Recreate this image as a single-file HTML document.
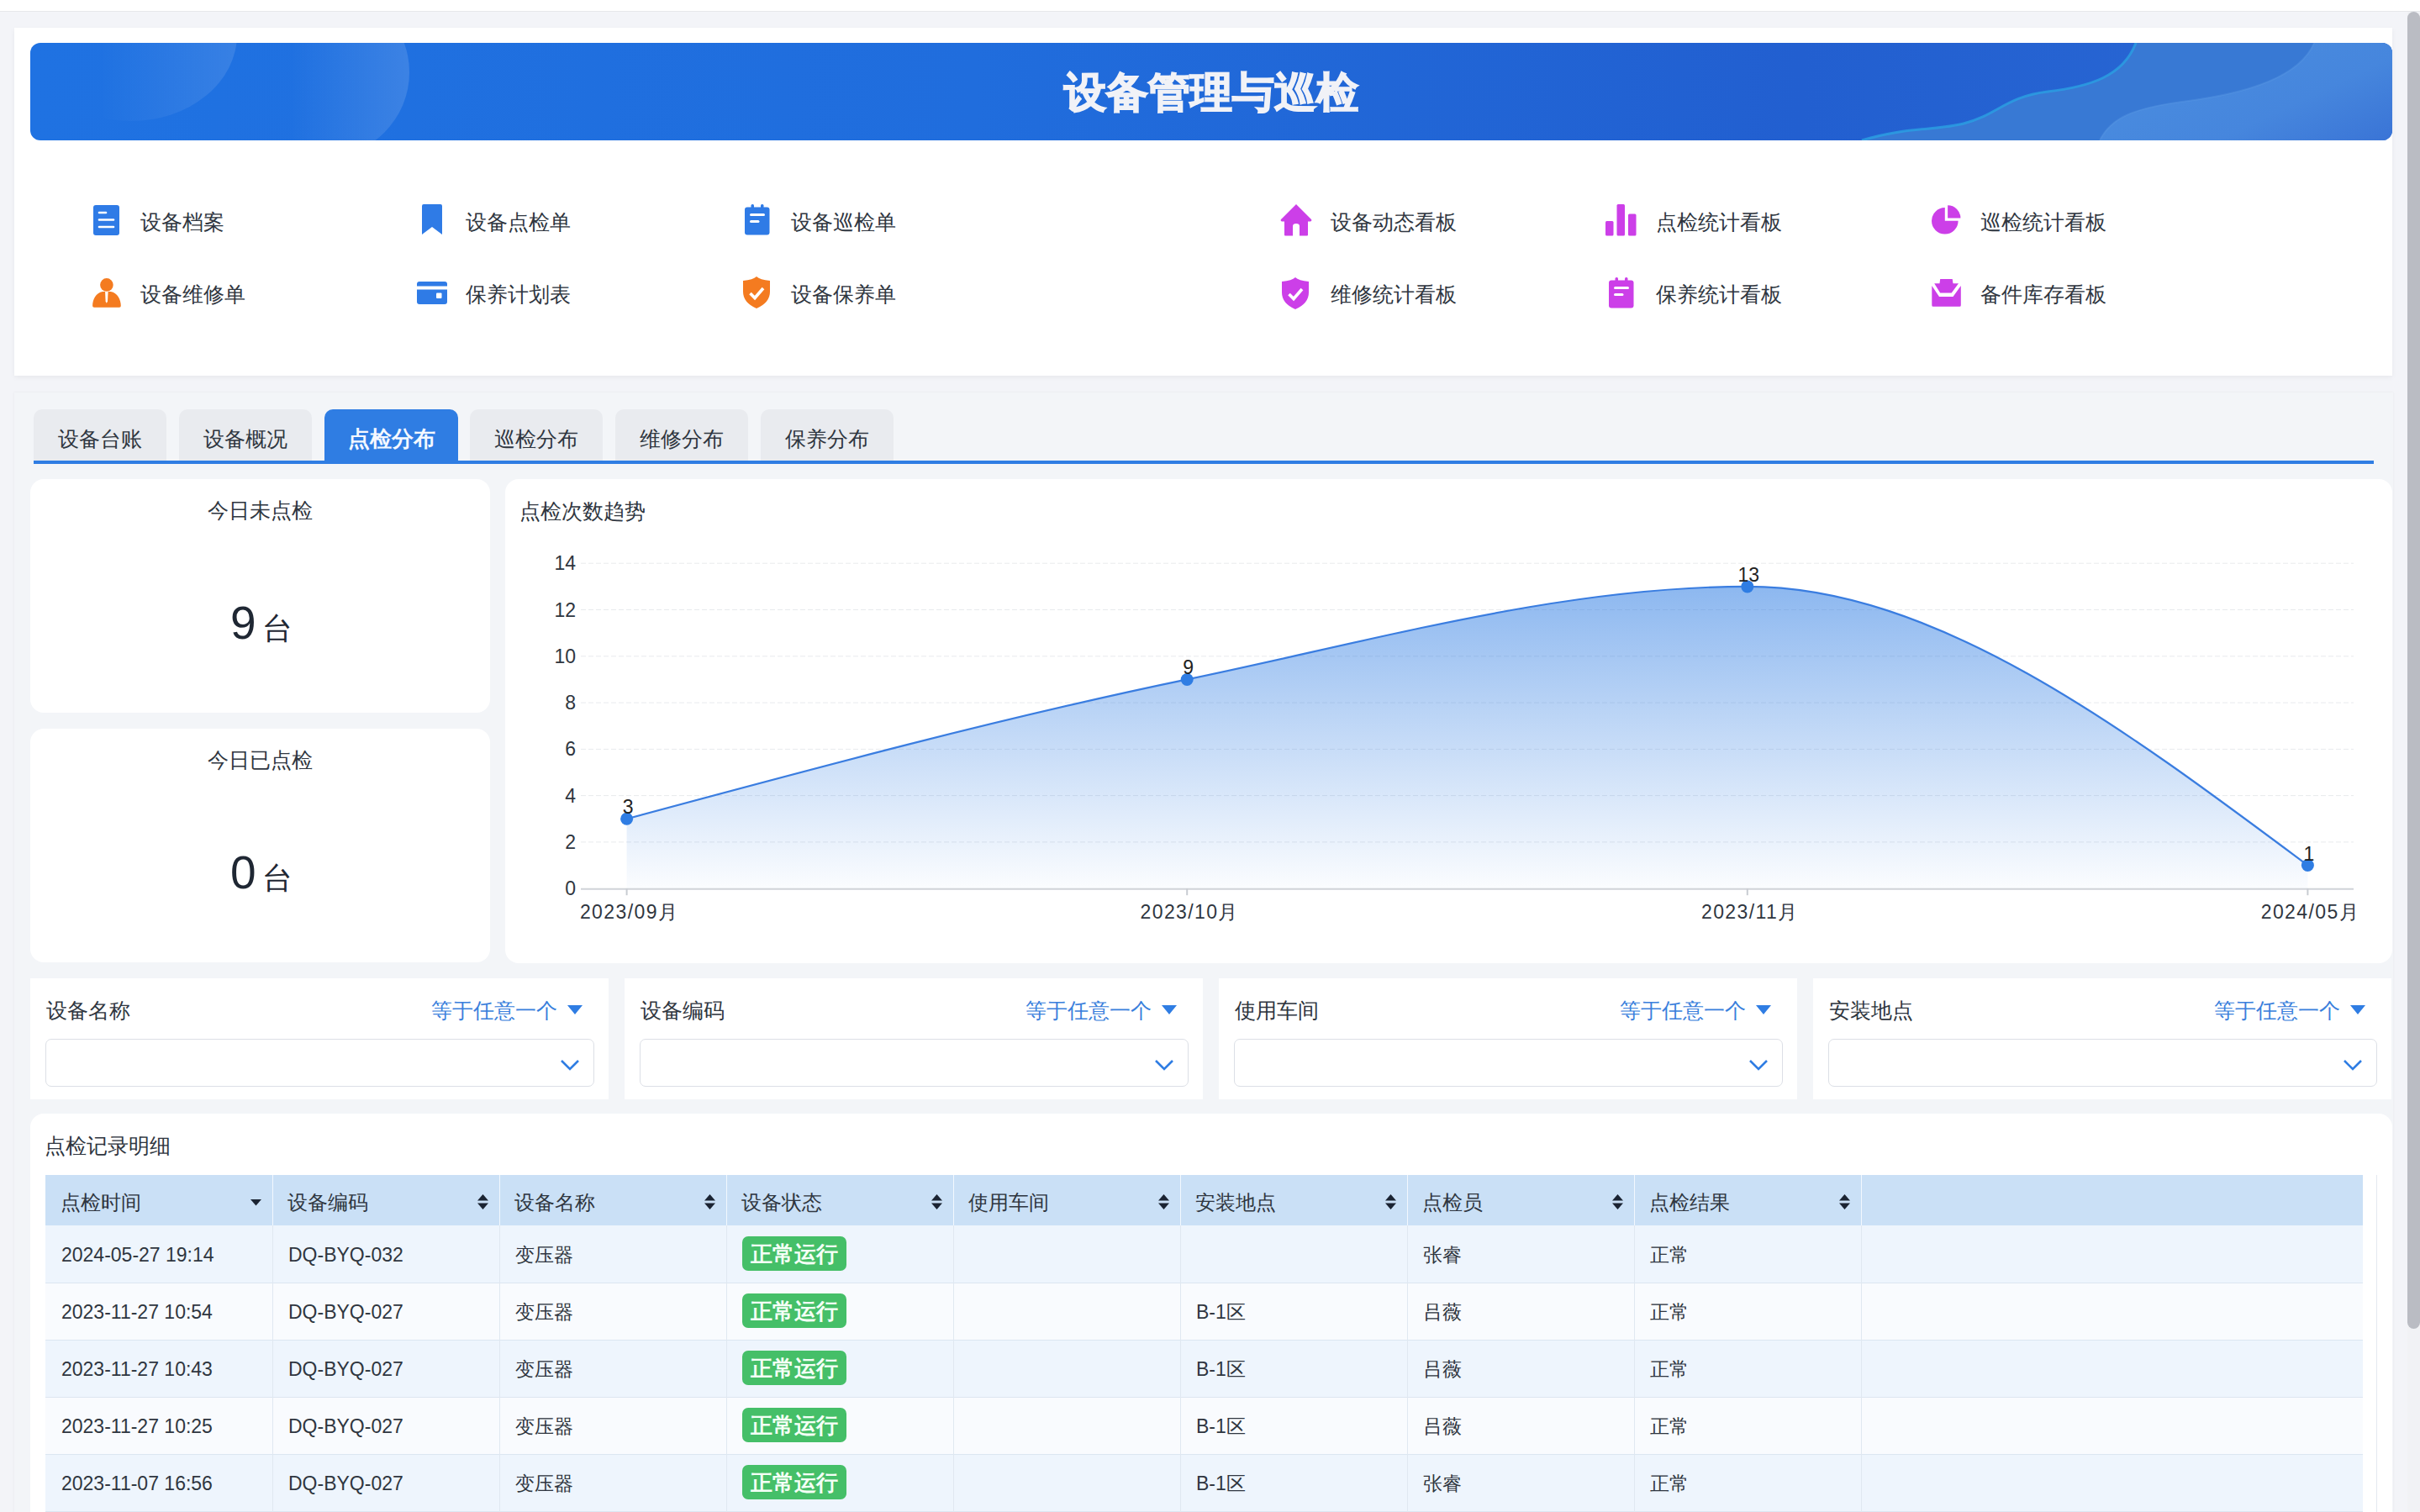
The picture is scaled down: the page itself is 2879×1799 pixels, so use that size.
<!DOCTYPE html>
<html><head><meta charset="utf-8"><title>设备管理与巡检</title>
<style>
*{box-sizing:border-box;margin:0;padding:0}
html,body{width:2879px;height:1799px;overflow:hidden}
body{background:#f3f4f8;font-family:"Liberation Sans", sans-serif;color:#2f3640;position:relative}
.a{position:absolute}
.t{position:absolute;white-space:nowrap;line-height:1}
</style></head><body>

<div class="a" style="left:0;top:0;width:2879px;height:14px;background:#fff;border-bottom:1px solid #e6e7ea"></div>
<div class="a" style="left:2864px;top:14px;width:15px;height:1785px;background:#f1f2f5"></div>
<div class="a" style="left:2864px;top:14px;width:15px;height:1567px;background:#babcc3;border-radius:8px"></div>
<div class="a" style="left:17px;top:33px;width:2829px;height:414px;background:#fff;box-shadow:0 2px 6px rgba(0,0,0,0.05)"></div>
<div class="a" style="left:36px;top:51px;width:2810px;height:116px;border-radius:12px;overflow:hidden;background:linear-gradient(90deg,#1f72e2 0%,#206ddd 40%,#225fd0 75%,#2a68d4 100%)">
<svg width="2810" height="116" style="position:absolute;left:0;top:0">
<defs>
<linearGradient id="c1" x1="0" y1="0" x2="1" y2="0"><stop offset="0.35" stop-color="#fff" stop-opacity="0"/><stop offset="1" stop-color="#fff" stop-opacity="0.11"/></linearGradient>
<linearGradient id="c2" x1="0" y1="0" x2="1" y2="0"><stop offset="0.3" stop-color="#fff" stop-opacity="0"/><stop offset="1" stop-color="#fff" stop-opacity="0.13"/></linearGradient>
<linearGradient id="w2" x1="0" y1="0.3" x2="1" y2="1"><stop offset="0" stop-color="#4a8ddf"/><stop offset="0.6" stop-color="#4686dd"/><stop offset="1" stop-color="#3a74d6"/></linearGradient>
</defs>
<ellipse cx="120" cy="-10" rx="126" ry="103" fill="url(#c1)"/>
<circle cx="350" cy="35" r="101" fill="url(#c2)"/>
<path d="M2179,116 C2230,100 2270,104 2300,96 C2340,86 2350,64 2400,58 C2450,52 2490,40 2505,0 L2810,0 L2810,116 Z" fill="#3879d4"/>
<path d="M2179,116 C2230,100 2270,104 2300,96 C2340,86 2350,64 2400,58 C2450,52 2490,40 2505,0" fill="none" stroke="#2aa0e2" stroke-width="3" opacity="0.8"/>
<path d="M2462,116 C2475,90 2500,78 2560,70 C2640,60 2700,40 2717,0 L2810,0 L2810,116 Z" fill="url(#w2)"/><path d="M2462,116 C2475,90 2500,78 2560,70 C2640,60 2700,40 2717,0" fill="none" stroke="#5b9ae6" stroke-width="2" opacity="0.35"/>
</svg>
<div class="t" style="left:0;width:2810px;text-align:center;top:34px;font-size:50px;font-weight:bold;color:#f1f2f7;-webkit-text-stroke:1.5px #f1f2f7">设备管理与巡检</div>
</div>
<svg class="a" style="left:111px;top:244px" width="31" height="36"><rect x="0" y="0" width="31" height="36" rx="3" fill="#2f7be6"/><g stroke="#fff" stroke-width="2.6" stroke-linecap="round"><line x1="7" y1="9" x2="15" y2="9"/><line x1="7" y1="17.5" x2="24" y2="17.5"/><line x1="7" y1="26" x2="24" y2="26"/></g></svg>
<div class="t" style="left:167px;top:252px;font-size:25.25px">设备档案</div>
<svg class="a" style="left:502px;top:243px" width="24" height="37"><path d="M2,0 L22,0 Q24,0 24,2 L24,36 L12,27 L0,36 L0,2 Q0,0 2,0 Z" fill="#2f7be6"/></svg>
<div class="t" style="left:554px;top:252px;font-size:25.25px">设备点检单</div>
<svg class="a" style="left:886px;top:243px" width="30" height="37"><rect x="0" y="3.5" width="29.5" height="33" rx="3" fill="#2f7be6"/><rect x="7.5" y="0" width="3.5" height="6" rx="1.5" fill="#2f7be6"/><rect x="19" y="0" width="3.5" height="6" rx="1.5" fill="#2f7be6"/><g stroke="#fff" stroke-width="3" stroke-linecap="round"><line x1="7.5" y1="12.5" x2="22.5" y2="12.5"/><line x1="7.5" y1="20.5" x2="16" y2="20.5"/></g></svg>
<div class="t" style="left:941px;top:252px;font-size:25.25px">设备巡检单</div>
<svg class="a" style="left:1523px;top:243px" width="38" height="38"><path d="M19,0 L37,18 Q38,20 36,20.5 L33,20.5 L33,36.5 Q33,37.5 32,37.5 L23,37.5 L23,26 Q23,23 19,23 Q15,23 15,26 L15,37.5 L6,37.5 Q5,37.5 5,36.5 L5,20.5 L2,20.5 Q0,20 1,18 Z" fill="#cc3fe8"/></svg>
<div class="t" style="left:1583px;top:252px;font-size:25.25px">设备动态看板</div>
<svg class="a" style="left:1910px;top:243px" width="37" height="38"><rect x="0" y="20" width="9.5" height="17.5" rx="1.5" fill="#cc3fe8"/><rect x="13.5" y="0" width="9.5" height="37.5" rx="1.5" fill="#cc3fe8"/><rect x="27" y="11.5" width="9.5" height="26" rx="1.5" fill="#cc3fe8"/></svg>
<div class="t" style="left:1970px;top:252px;font-size:25.25px">点检统计看板</div>
<svg class="a" style="left:2298px;top:244px" width="36" height="36"><path d="M15.8,3 L15.8,18.8 L31.6,18.8 A15.8,15.8 0 1 1 15.8,3 Z" fill="#cc3fe8"/><path d="M19.1,0.2 A15.3,15.3 0 0 1 34.4,15.5 L19.1,15.5 Z" fill="#cc3fe8"/></svg>
<div class="t" style="left:2356px;top:252px;font-size:25.25px">巡检统计看板</div>
<svg class="a" style="left:110px;top:331px" width="35" height="36"><circle cx="16.9" cy="7.9" r="7.8" fill="#f47b20"/><path d="M12,16.1 C4,17.5 0,26 0.1,33 Q0.1,34.7 2,34.7 L32,34.7 Q33.8,34.7 33.8,33 C33.8,26 29.8,17.5 21.8,16.1 Z" fill="#f47b20"/><path d="M15.1,16.1 L18.6,16.1 L18,27.5 L16.8,29.7 L15.6,27.5 Z" fill="#fff"/></svg>
<div class="t" style="left:167px;top:338px;font-size:25.25px">设备维修单</div>
<svg class="a" style="left:496px;top:335px" width="36" height="27"><rect x="0" y="0" width="36" height="27" rx="3" fill="#2f7be6"/><rect x="0" y="5.5" width="36" height="4" fill="#fff"/><rect x="23" y="13.5" width="6.5" height="6.5" rx="1" fill="#fff"/></svg>
<div class="t" style="left:554px;top:338px;font-size:25.25px">保养计划表</div>
<svg class="a" style="left:884px;top:329px" width="32" height="38"><path d="M16,0 Q20,4 32,5 L32,18 Q32,31 16,38 Q0,31 0,18 L0,5 Q12,4 16,0 Z" fill="#f47b20"/><path d="M8.5,20 L14,25.5 L24,14" fill="none" stroke="#fff" stroke-width="3.6"/></svg>
<div class="t" style="left:941px;top:338px;font-size:25.25px">设备保养单</div>
<svg class="a" style="left:1525px;top:330px" width="32" height="38"><path d="M16,0 Q20,4 32,5 L32,18 Q32,31 16,38 Q0,31 0,18 L0,5 Q12,4 16,0 Z" fill="#cc3fe8"/><path d="M8.5,20 L14,25.5 L24,14" fill="none" stroke="#fff" stroke-width="3.6"/></svg>
<div class="t" style="left:1583px;top:338px;font-size:25.25px">维修统计看板</div>
<svg class="a" style="left:1914px;top:330px" width="30" height="37"><rect x="0" y="3.5" width="29.5" height="33" rx="3" fill="#cc3fe8"/><rect x="7.5" y="0" width="3.5" height="6" rx="1.5" fill="#cc3fe8"/><rect x="19" y="0" width="3.5" height="6" rx="1.5" fill="#cc3fe8"/><g stroke="#fff" stroke-width="3" stroke-linecap="round"><line x1="7.5" y1="12.5" x2="22.5" y2="12.5"/><line x1="7.5" y1="20.5" x2="16" y2="20.5"/></g></svg>
<div class="t" style="left:1970px;top:338px;font-size:25.25px">保养统计看板</div>
<svg class="a" style="left:2298px;top:332px" width="36" height="34"><path d="M10.2,0 L24.7,0 L25.5,5.3 L32,5.3 L23.7,16.6 L10.2,16.6 L3.2,5.3 L9.5,5.3 Z" fill="#cc3fe8"/><path d="M0.3,8 L9,20.9 L25.5,20.9 L34.8,8 L34.8,31.3 Q34.8,32.8 33.3,32.8 L1.8,32.8 Q0.3,32.8 0.3,31.3 Z" fill="#cc3fe8"/></svg>
<div class="t" style="left:2356px;top:338px;font-size:25.25px">备件库存看板</div>
<div class="a" style="left:17px;top:467px;width:2830px;height:1340px;background:#f3f5f8;box-shadow:0 0 3px rgba(0,0,0,0.06)"></div>
<div class="a" style="left:40px;top:487px;width:158px;height:61px;background:#e9ebef;border-radius:10px 10px 0 0"></div>
<div class="t" style="left:40px;width:158px;text-align:center;top:509.5px;font-size:25.25px">设备台账</div>
<div class="a" style="left:213px;top:487px;width:158px;height:61px;background:#e9ebef;border-radius:10px 10px 0 0"></div>
<div class="t" style="left:213px;width:158px;text-align:center;top:509.5px;font-size:25.25px">设备概况</div>
<div class="a" style="left:386px;top:487px;width:159px;height:64px;background:#2f7de3;border-radius:10px 10px 0 0"></div>
<div class="t" style="left:386px;width:159px;text-align:center;top:509.5px;font-size:25.5px;font-weight:bold;color:#f4f8ff">点检分布</div>
<div class="a" style="left:559px;top:487px;width:158px;height:61px;background:#e9ebef;border-radius:10px 10px 0 0"></div>
<div class="t" style="left:559px;width:158px;text-align:center;top:509.5px;font-size:25.25px">巡检分布</div>
<div class="a" style="left:732px;top:487px;width:158px;height:61px;background:#e9ebef;border-radius:10px 10px 0 0"></div>
<div class="t" style="left:732px;width:158px;text-align:center;top:509.5px;font-size:25.25px">维修分布</div>
<div class="a" style="left:905px;top:487px;width:158px;height:61px;background:#e9ebef;border-radius:10px 10px 0 0"></div>
<div class="t" style="left:905px;width:158px;text-align:center;top:509.5px;font-size:25.25px">保养分布</div>
<div class="a" style="left:40px;top:548px;width:2784px;height:4px;background:#2f7de3"></div>
<div class="a" style="left:36px;top:570px;width:547px;height:278px;background:#fff;border-radius:16px"></div>
<div class="t" style="left:36px;width:547px;text-align:center;top:594.5px;font-size:25.25px">今日未点检</div>
<div class="t" style="left:274px;top:713.5px;font-size:55px;color:#1f2733">9</div>
<div class="t" style="left:312px;top:730px;font-size:36px;color:#1f2733">台</div>
<div class="a" style="left:36px;top:867px;width:547px;height:278px;background:#fff;border-radius:16px"></div>
<div class="t" style="left:36px;width:547px;text-align:center;top:891.5px;font-size:25.25px">今日已点检</div>
<div class="t" style="left:274px;top:1010.5px;font-size:55px;color:#1f2733">0</div>
<div class="t" style="left:312px;top:1027px;font-size:36px;color:#1f2733">台</div>
<div class="a" style="left:601px;top:570px;width:2245px;height:576px;background:#fff;border-radius:16px"></div>
<div class="t" style="left:618px;top:595.5px;font-size:25.25px">点检次数趋势</div>
<svg class="a" style="left:0;top:0" width="2879" height="1799"><defs><linearGradient id="ag" x1="0" y1="697.88" x2="0" y2="1057.2" gradientUnits="userSpaceOnUse"><stop offset="0" stop-color="#2f7de3" stop-opacity="0.55"/><stop offset="1" stop-color="#2f7de3" stop-opacity="0.02"/></linearGradient></defs><line x1="691" y1="1001.9" x2="2800" y2="1001.9" stroke="#e8eaed" stroke-width="1" stroke-dasharray="6,3"/><line x1="691" y1="946.6" x2="2800" y2="946.6" stroke="#e8eaed" stroke-width="1" stroke-dasharray="6,3"/><line x1="691" y1="891.4" x2="2800" y2="891.4" stroke="#e8eaed" stroke-width="1" stroke-dasharray="6,3"/><line x1="691" y1="836.1" x2="2800" y2="836.1" stroke="#e8eaed" stroke-width="1" stroke-dasharray="6,3"/><line x1="691" y1="780.8" x2="2800" y2="780.8" stroke="#e8eaed" stroke-width="1" stroke-dasharray="6,3"/><line x1="691" y1="725.5" x2="2800" y2="725.5" stroke="#e8eaed" stroke-width="1" stroke-dasharray="6,3"/><line x1="691" y1="670.2" x2="2800" y2="670.2" stroke="#e8eaed" stroke-width="1" stroke-dasharray="6,3"/><path d="M745.60,974.28 C967.80,914.39 1190.00,854.51 1412.20,808.44 C1634.40,762.37 1856.60,697.88 2078.80,697.88 C2301.00,697.88 2523.20,863.72 2745.40,1029.56 L2745.4,1057.2 L745.6,1057.2 Z" fill="url(#ag)"/><line x1="691" y1="1057.7" x2="2800" y2="1057.7" stroke="#d0d3d8" stroke-width="2"/><line x1="745.6" y1="1057.2" x2="745.6" y2="1065.2" stroke="#c8ccd2" stroke-width="2"/><line x1="1412.2" y1="1057.2" x2="1412.2" y2="1065.2" stroke="#c8ccd2" stroke-width="2"/><line x1="2078.8" y1="1057.2" x2="2078.8" y2="1065.2" stroke="#c8ccd2" stroke-width="2"/><line x1="2745.4" y1="1057.2" x2="2745.4" y2="1065.2" stroke="#c8ccd2" stroke-width="2"/><path d="M745.60,974.28 C967.80,914.39 1190.00,854.51 1412.20,808.44 C1634.40,762.37 1856.60,697.88 2078.80,697.88 C2301.00,697.88 2523.20,863.72 2745.40,1029.56" fill="none" stroke="#3a7de0" stroke-width="2.2"/><circle cx="745.6" cy="974.28" r="7.5" fill="#2f7de3"/><circle cx="1412.2" cy="808.44" r="7.5" fill="#2f7de3"/><circle cx="2078.8" cy="697.88" r="7.5" fill="#2f7de3"/><circle cx="2745.4" cy="1029.56" r="7.5" fill="#2f7de3"/></svg>
<div class="t" style="left:600px;width:85px;text-align:right;top:1046.2px;font-size:23px">0</div>
<div class="t" style="left:600px;width:85px;text-align:right;top:990.9px;font-size:23px">2</div>
<div class="t" style="left:600px;width:85px;text-align:right;top:935.6px;font-size:23px">4</div>
<div class="t" style="left:600px;width:85px;text-align:right;top:880.4px;font-size:23px">6</div>
<div class="t" style="left:600px;width:85px;text-align:right;top:825.1px;font-size:23px">8</div>
<div class="t" style="left:600px;width:85px;text-align:right;top:769.8px;font-size:23px">10</div>
<div class="t" style="left:600px;width:85px;text-align:right;top:714.5px;font-size:23px">12</div>
<div class="t" style="left:600px;width:85px;text-align:right;top:659.2px;font-size:23px">14</div>
<div class="t" style="left:648.6px;width:200px;text-align:center;top:1074px;font-size:23px;letter-spacing:1.4px">2023/09月</div>
<div class="t" style="left:1315.2px;width:200px;text-align:center;top:1074px;font-size:23px;letter-spacing:1.4px">2023/10月</div>
<div class="t" style="left:1981.8000000000002px;width:200px;text-align:center;top:1074px;font-size:23px;letter-spacing:1.4px">2023/11月</div>
<div class="t" style="left:2648.4px;width:200px;text-align:center;top:1074px;font-size:23px;letter-spacing:1.4px">2024/05月</div>
<div class="t" style="left:697.1px;width:100px;text-align:center;top:949.3px;font-size:23px;color:#222">3</div>
<div class="t" style="left:1363.7px;width:100px;text-align:center;top:783.4px;font-size:23px;color:#222">9</div>
<div class="t" style="left:2030.3000000000002px;width:100px;text-align:center;top:672.9px;font-size:23px;color:#222">13</div>
<div class="t" style="left:2696.9px;width:100px;text-align:center;top:1004.6px;font-size:23px;color:#222">1</div>
<div class="a" style="left:36px;top:1164px;width:688px;height:144px;background:#fff"></div>
<div class="t" style="left:55px;top:1190px;font-size:25.25px">设备名称</div>
<div class="t" style="left:513px;top:1190px;font-size:25.25px;color:#3a7fdc">等于任意一个</div>
<svg class="a" style="left:675px;top:1196px" width="18" height="12"><path d="M0,0 L18,0 L9,11 Z" fill="#2f7de3"/></svg>
<div class="a" style="left:54px;top:1236px;width:653px;height:57px;border:1.5px solid #dcdfe6;border-radius:7px;background:#fff"></div>
<svg class="a" style="left:666px;top:1260px" width="24" height="14"><path d="M2,2 L12,12 L22,2" fill="none" stroke="#2f7de3" stroke-width="2.6"/></svg>
<div class="a" style="left:743px;top:1164px;width:688px;height:144px;background:#fff"></div>
<div class="t" style="left:762px;top:1190px;font-size:25.25px">设备编码</div>
<div class="t" style="left:1220px;top:1190px;font-size:25.25px;color:#3a7fdc">等于任意一个</div>
<svg class="a" style="left:1382px;top:1196px" width="18" height="12"><path d="M0,0 L18,0 L9,11 Z" fill="#2f7de3"/></svg>
<div class="a" style="left:761px;top:1236px;width:653px;height:57px;border:1.5px solid #dcdfe6;border-radius:7px;background:#fff"></div>
<svg class="a" style="left:1373px;top:1260px" width="24" height="14"><path d="M2,2 L12,12 L22,2" fill="none" stroke="#2f7de3" stroke-width="2.6"/></svg>
<div class="a" style="left:1450px;top:1164px;width:688px;height:144px;background:#fff"></div>
<div class="t" style="left:1469px;top:1190px;font-size:25.25px">使用车间</div>
<div class="t" style="left:1927px;top:1190px;font-size:25.25px;color:#3a7fdc">等于任意一个</div>
<svg class="a" style="left:2089px;top:1196px" width="18" height="12"><path d="M0,0 L18,0 L9,11 Z" fill="#2f7de3"/></svg>
<div class="a" style="left:1468px;top:1236px;width:653px;height:57px;border:1.5px solid #dcdfe6;border-radius:7px;background:#fff"></div>
<svg class="a" style="left:2080px;top:1260px" width="24" height="14"><path d="M2,2 L12,12 L22,2" fill="none" stroke="#2f7de3" stroke-width="2.6"/></svg>
<div class="a" style="left:2157px;top:1164px;width:688px;height:144px;background:#fff"></div>
<div class="t" style="left:2176px;top:1190px;font-size:25.25px">安装地点</div>
<div class="t" style="left:2634px;top:1190px;font-size:25.25px;color:#3a7fdc">等于任意一个</div>
<svg class="a" style="left:2796px;top:1196px" width="18" height="12"><path d="M0,0 L18,0 L9,11 Z" fill="#2f7de3"/></svg>
<div class="a" style="left:2175px;top:1236px;width:653px;height:57px;border:1.5px solid #dcdfe6;border-radius:7px;background:#fff"></div>
<svg class="a" style="left:2787px;top:1260px" width="24" height="14"><path d="M2,2 L12,12 L22,2" fill="none" stroke="#2f7de3" stroke-width="2.6"/></svg>
<div class="a" style="left:36px;top:1325px;width:2810px;height:500px;background:#fff;border-radius:16px"></div>
<div class="t" style="left:53px;top:1351px;font-size:25.25px">点检记录明细</div>
<div class="a" style="left:54px;top:1398px;width:2774px;height:420px;border-right:1px solid #e3e8ef"></div>
<div class="a" style="left:54px;top:1398px;width:2757px;height:60px;background:#cae0f6"></div>
<div class="t" style="left:72px;top:1420px;font-size:23.5px">点检时间</div>
<svg class="a" style="left:298px;top:1427px" width="13" height="8"><path d="M0,0 L13,0 L6.5,7.5 Z" fill="#1b2433"/></svg>
<div class="t" style="left:342px;top:1420px;font-size:23.5px">设备编码</div>
<svg class="a" style="left:568px;top:1421px" width="13" height="18"><path d="M0,7.5 L13,7.5 L6.5,0 Z M0,10.5 L13,10.5 L6.5,18 Z" fill="#1b2433"/></svg>
<div class="t" style="left:612px;top:1420px;font-size:23.5px">设备名称</div>
<svg class="a" style="left:838px;top:1421px" width="13" height="18"><path d="M0,7.5 L13,7.5 L6.5,0 Z M0,10.5 L13,10.5 L6.5,18 Z" fill="#1b2433"/></svg>
<div class="t" style="left:882px;top:1420px;font-size:23.5px">设备状态</div>
<svg class="a" style="left:1108px;top:1421px" width="13" height="18"><path d="M0,7.5 L13,7.5 L6.5,0 Z M0,10.5 L13,10.5 L6.5,18 Z" fill="#1b2433"/></svg>
<div class="t" style="left:1152px;top:1420px;font-size:23.5px">使用车间</div>
<svg class="a" style="left:1378px;top:1421px" width="13" height="18"><path d="M0,7.5 L13,7.5 L6.5,0 Z M0,10.5 L13,10.5 L6.5,18 Z" fill="#1b2433"/></svg>
<div class="t" style="left:1422px;top:1420px;font-size:23.5px">安装地点</div>
<svg class="a" style="left:1648px;top:1421px" width="13" height="18"><path d="M0,7.5 L13,7.5 L6.5,0 Z M0,10.5 L13,10.5 L6.5,18 Z" fill="#1b2433"/></svg>
<div class="t" style="left:1692px;top:1420px;font-size:23.5px">点检员</div>
<svg class="a" style="left:1918px;top:1421px" width="13" height="18"><path d="M0,7.5 L13,7.5 L6.5,0 Z M0,10.5 L13,10.5 L6.5,18 Z" fill="#1b2433"/></svg>
<div class="t" style="left:1962px;top:1420px;font-size:23.5px">点检结果</div>
<svg class="a" style="left:2188px;top:1421px" width="13" height="18"><path d="M0,7.5 L13,7.5 L6.5,0 Z M0,10.5 L13,10.5 L6.5,18 Z" fill="#1b2433"/></svg>
<div class="a" style="left:324px;top:1398px;width:1.2px;height:60px;background:#f2f8fe"></div>
<div class="a" style="left:594px;top:1398px;width:1.2px;height:60px;background:#f2f8fe"></div>
<div class="a" style="left:864px;top:1398px;width:1.2px;height:60px;background:#f2f8fe"></div>
<div class="a" style="left:1134px;top:1398px;width:1.2px;height:60px;background:#f2f8fe"></div>
<div class="a" style="left:1404px;top:1398px;width:1.2px;height:60px;background:#f2f8fe"></div>
<div class="a" style="left:1674px;top:1398px;width:1.2px;height:60px;background:#f2f8fe"></div>
<div class="a" style="left:1944px;top:1398px;width:1.2px;height:60px;background:#f2f8fe"></div>
<div class="a" style="left:2214px;top:1398px;width:1.2px;height:60px;background:#f2f8fe"></div>
<div class="a" style="left:54px;top:1458px;width:2757px;height:68px;background:#eef5fd"></div>
<div class="a" style="left:54px;top:1526px;width:2757px;height:68px;background:#f9fbfe"></div>
<div class="a" style="left:54px;top:1594px;width:2757px;height:68px;background:#eef5fd"></div>
<div class="a" style="left:54px;top:1662px;width:2757px;height:68px;background:#f9fbfe"></div>
<div class="a" style="left:54px;top:1730px;width:2757px;height:68px;background:#eef5fd"></div>
<div class="a" style="left:54px;top:1526px;width:2757px;height:1.2px;background:#dce6f1"></div>
<div class="a" style="left:54px;top:1594px;width:2757px;height:1.2px;background:#dce6f1"></div>
<div class="a" style="left:54px;top:1662px;width:2757px;height:1.2px;background:#dce6f1"></div>
<div class="a" style="left:54px;top:1730px;width:2757px;height:1.2px;background:#dce6f1"></div>
<div class="a" style="left:54px;top:1798px;width:2757px;height:1.2px;background:#dce6f1"></div>
<div class="t" style="left:73px;top:1482px;font-size:23px">2024-05-27 19:14</div>
<div class="t" style="left:343px;top:1482px;font-size:23px">DQ-BYQ-032</div>
<div class="t" style="left:613px;top:1482px;font-size:23px">变压器</div>
<div class="a" style="left:883px;top:1471px;width:124px;height:41px;background:#45bf68;border-radius:7px"></div>
<div class="t" style="left:883px;width:124px;text-align:center;top:1480px;font-size:25.5px;font-weight:bold;color:#f4fff6">正常运行</div>
<div class="t" style="left:1693px;top:1482px;font-size:23px">张睿</div>
<div class="t" style="left:1963px;top:1482px;font-size:23px">正常</div>
<div class="t" style="left:73px;top:1550px;font-size:23px">2023-11-27 10:54</div>
<div class="t" style="left:343px;top:1550px;font-size:23px">DQ-BYQ-027</div>
<div class="t" style="left:613px;top:1550px;font-size:23px">变压器</div>
<div class="a" style="left:883px;top:1539px;width:124px;height:41px;background:#45bf68;border-radius:7px"></div>
<div class="t" style="left:883px;width:124px;text-align:center;top:1548px;font-size:25.5px;font-weight:bold;color:#f4fff6">正常运行</div>
<div class="t" style="left:1423px;top:1550px;font-size:23px">B-1区</div>
<div class="t" style="left:1693px;top:1550px;font-size:23px">吕薇</div>
<div class="t" style="left:1963px;top:1550px;font-size:23px">正常</div>
<div class="t" style="left:73px;top:1618px;font-size:23px">2023-11-27 10:43</div>
<div class="t" style="left:343px;top:1618px;font-size:23px">DQ-BYQ-027</div>
<div class="t" style="left:613px;top:1618px;font-size:23px">变压器</div>
<div class="a" style="left:883px;top:1607px;width:124px;height:41px;background:#45bf68;border-radius:7px"></div>
<div class="t" style="left:883px;width:124px;text-align:center;top:1616px;font-size:25.5px;font-weight:bold;color:#f4fff6">正常运行</div>
<div class="t" style="left:1423px;top:1618px;font-size:23px">B-1区</div>
<div class="t" style="left:1693px;top:1618px;font-size:23px">吕薇</div>
<div class="t" style="left:1963px;top:1618px;font-size:23px">正常</div>
<div class="t" style="left:73px;top:1686px;font-size:23px">2023-11-27 10:25</div>
<div class="t" style="left:343px;top:1686px;font-size:23px">DQ-BYQ-027</div>
<div class="t" style="left:613px;top:1686px;font-size:23px">变压器</div>
<div class="a" style="left:883px;top:1675px;width:124px;height:41px;background:#45bf68;border-radius:7px"></div>
<div class="t" style="left:883px;width:124px;text-align:center;top:1684px;font-size:25.5px;font-weight:bold;color:#f4fff6">正常运行</div>
<div class="t" style="left:1423px;top:1686px;font-size:23px">B-1区</div>
<div class="t" style="left:1693px;top:1686px;font-size:23px">吕薇</div>
<div class="t" style="left:1963px;top:1686px;font-size:23px">正常</div>
<div class="t" style="left:73px;top:1754px;font-size:23px">2023-11-07 16:56</div>
<div class="t" style="left:343px;top:1754px;font-size:23px">DQ-BYQ-027</div>
<div class="t" style="left:613px;top:1754px;font-size:23px">变压器</div>
<div class="a" style="left:883px;top:1743px;width:124px;height:41px;background:#45bf68;border-radius:7px"></div>
<div class="t" style="left:883px;width:124px;text-align:center;top:1752px;font-size:25.5px;font-weight:bold;color:#f4fff6">正常运行</div>
<div class="t" style="left:1423px;top:1754px;font-size:23px">B-1区</div>
<div class="t" style="left:1693px;top:1754px;font-size:23px">张睿</div>
<div class="t" style="left:1963px;top:1754px;font-size:23px">正常</div>
<div class="a" style="left:324px;top:1458px;width:1.2px;height:360px;background:#e0e8f1"></div>
<div class="a" style="left:594px;top:1458px;width:1.2px;height:360px;background:#e0e8f1"></div>
<div class="a" style="left:864px;top:1458px;width:1.2px;height:360px;background:#e0e8f1"></div>
<div class="a" style="left:1134px;top:1458px;width:1.2px;height:360px;background:#e0e8f1"></div>
<div class="a" style="left:1404px;top:1458px;width:1.2px;height:360px;background:#e0e8f1"></div>
<div class="a" style="left:1674px;top:1458px;width:1.2px;height:360px;background:#e0e8f1"></div>
<div class="a" style="left:1944px;top:1458px;width:1.2px;height:360px;background:#e0e8f1"></div>
<div class="a" style="left:2214px;top:1458px;width:1.2px;height:360px;background:#e0e8f1"></div>
</body></html>
